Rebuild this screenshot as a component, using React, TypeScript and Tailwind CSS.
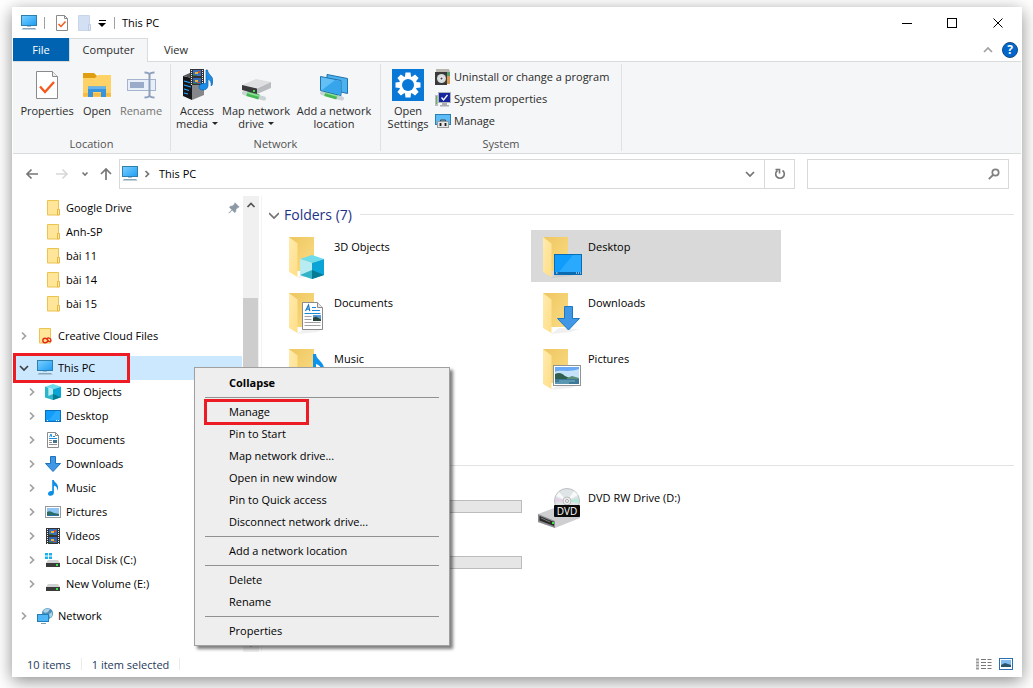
import { ReactNode } from 'react'

type IconProps = { className?: string }

function MonitorIcon({ className = 'h-4 w-4' }: IconProps) {
  return (
    <svg viewBox="0 0 16 16" className={className}>
      <defs>
        <linearGradient id="screen" x1="0" y1="0" x2="1" y2="1">
          <stop offset="0" stopColor="#7cd0ff" />
          <stop offset="1" stopColor="#1c9df5" />
        </linearGradient>
      </defs>
      <rect x="0.5" y="0.5" width="15" height="10" fill="url(#screen)" stroke="#2f7fae" />
      <rect x="6" y="11" width="4" height="1" fill="#9cc3dc" />
      <path d="M2 13h12l1.500 1.500H.5z" fill="#8aa5b8" />
    </svg>
  )
}

function CheckDocIcon({ className = 'h-4 w-4' }: IconProps) {
  return (
    <svg viewBox="0 0 24 32" className={className}>
      <path d="M1.500 2.500h16l5 5v22h-21z" fill="#fff" stroke="#8a8a8a" />
      <path d="M17.500 2.500v5h5" fill="#eee" stroke="#8a8a8a" />
      <path d="M5 17.500l5 5.500 9-10" fill="none" stroke="#f4581c" strokeWidth="2.300" />
    </svg>
  )
}

function CheckDocSmallIcon() {
  return (
    <svg viewBox="0 0 12 16" className="h-4 w-3">
      <path d="M.5.5h8l3 3v12H.5z" fill="#fff" stroke="#8a8a8a" />
      <path d="M8.500.5v3h3" fill="none" stroke="#8a8a8a" />
      <path d="M2.500 9l2.500 2.500L9.500 6.500" fill="none" stroke="#f4581c" strokeWidth="1.500" />
    </svg>
  )
}

function FolderSmallIcon({ className = 'h-4 w-4' }: IconProps) {
  return (
    <svg viewBox="0 0 16 16" className={className}>
      <path d="M2.500.5h11v14.500h-11z" fill="#ffe597" stroke="#ecc34f" />
      <path d="M12.500 9.500h2V15h-2z" fill="#ffe9a8" stroke="#e5b93f" />
    </svg>
  )
}

function GhostFolderIcon() {
  return (
    <svg viewBox="0 0 16 16" className="h-4 w-4">
      <path d="M2.500.5h11v15h-11z" fill="#d3e0f3" stroke="#c8d6ec" />
      <path d="M12.500 9.500h2v6h-2z" fill="#dde7f6" stroke="#bccce6" />
    </svg>
  )
}

function CreativeCloudIcon() {
  return (
    <svg viewBox="0 0 16 16" className="h-4 w-4">
      <path d="M2.500.5h11v14.500h-11z" fill="#ffe597" stroke="#ecc34f" />
      <path
        d="M11.500 12.800c-1.200 1.300-2.200 2-3.400 2a2.300 2.300 0 1 1 0-4.600c1.300 0 2.500 1.600 3.600 2.900.8.900 2.300.5 2.300-.8 0-2.600-3.700-2.900-4.600-1"
        fill="none"
        stroke="#e32a14"
        strokeWidth="1.400"
      />
    </svg>
  )
}

function CubeShape() {
  return (
    <>
      <path d="M12 0l12 4-12 4L0 4z" fill="#6fdcec" />
      <path d="M0 4l12 4v16L0 20z" fill="#b7edf2" />
      <path d="M24 4L12 8v16l12-4z" fill="#0aa5d6" />
      <path d="M0 20l12-5v9z" fill="#33b3c7" />
      <path d="M24 20l-12-5v9z" fill="#057a94" />
    </>
  )
}

function CubeIcon() {
  return (
    <svg viewBox="0 0 24 24" className="h-4 w-4">
      <CubeShape />
      <path d="M0 4l5 1.700v16L0 20z" fill="#2cb4cb" />
    </svg>
  )
}

function DesktopShape() {
  return (
    <>
      <rect x="0.5" y="0.5" width="27" height="20" fill="#109cfb" stroke="#0a6cb4" />
      <path d="M5 18L19 1h8v17z" fill="#2aaaff" />
      <rect x="1" y="18" width="26" height="2" fill="#0b6bb0" />
      <path d="M2 19h1.500M22 19h1M24 19h1M26 19h1" stroke="#fff" />
    </>
  )
}

function DesktopIcon() {
  return (
    <svg viewBox="0 0 16 16" className="h-4 w-4">
      <rect x="0.5" y="2.500" width="15" height="11" fill="#109cfb" stroke="#0a70bd" />
      <path d="M4 12l7-9h4v9z" fill="#2aaaff" />
      <path d="M2 12.500h1M11 12.500h1M13 12.500h1" stroke="#fff" />
    </svg>
  )
}

function DocumentShape() {
  return (
    <>
      <path d="M.5.5h15l5 5v22H.5z" fill="#fff" stroke="#8b8b8b" />
      <path d="M15.500.5v5h5" fill="#e8e8e8" stroke="#8b8b8b" />
      <path d="M3.500 9l3-6 1.300 6M4.500 7.200h3" fill="none" stroke="#1679c6" strokeWidth="1.200" />
      <path d="M10 5.500h4M10 8.500h8M2.500 11.500h16" stroke="#1e8ad6" />
      <path d="M2.500 14.500h7M2.500 17.500h7M2.500 20.500h16M2.500 23.500h16" stroke="#a2a2a2" />
      <rect x="11" y="13" width="8" height="6" fill="#5a9bd5" />
      <path d="M11 16l3-1.500 5 3V19h-8z" fill="#28463c" />
    </>
  )
}

function DocumentIcon() {
  return (
    <svg viewBox="0 0 16 16" className="h-4 w-4">
      <path d="M2.500.5h8l3 3v12h-11z" fill="#fff" stroke="#8b8b8b" />
      <path d="M10.500.5v3h3" fill="none" stroke="#8b8b8b" />
      <path d="M4.500 5l1.500-3 .8 3M8 4.500h2M4 6.500h8" fill="none" stroke="#1e8ad6" />
      <path d="M4 8.500h3M4 10.500h3M4 12.500h8" stroke="#8f8f8f" />
      <rect x="8" y="8" width="4" height="3" fill="#41748e" />
    </svg>
  )
}

function DownloadIcon() {
  return (
    <svg viewBox="0 0 16 16" className="h-4 w-4">
      <path d="M5.500.5h5v7h5L8 15.500.5 7.500h5z" fill="#3f97e6" stroke="#1f72bd" />
    </svg>
  )
}

function MusicIcon() {
  return (
    <svg viewBox="0 0 16 16" className="h-4 w-4">
      <path d="M7.200 0h1.600c.3 2.400 4.900 3.800 4.300 8.300-.1.900-.5 1.700-1 2.200.4-2.700-.7-4.300-3.200-4.900v7.100c0 1.800-1.500 3.100-3.300 3.100C4 15.800 3 15 3 13.700c0-1.700 2-3.100 4.200-2.600z" fill="#0c8fe6" />
    </svg>
  )
}

function PictureShape() {
  return (
    <>
      <rect x="0.5" y="0.5" width="27" height="20" fill="#fff" stroke="#8f9499" />
      <rect x="2" y="2" width="24" height="17" fill="#6aa9f5" />
      <path d="M2 7c5-3 13 1 24-3v9H2z" fill="#c6e2f8" />
      <path d="M2 9c4-2 7-1 10 2l7 3v1H2z" fill="#2f5f4f" />
      <path d="M14 13l5-2 7 2v2H14z" fill="#5d8f79" />
      <rect x="2" y="14" width="24" height="5" fill="#3d7896" />
      <path d="M6 16h16M2 18h14" stroke="#78b5cf" />
    </>
  )
}

function PictureIcon() {
  return (
    <svg viewBox="0 0 16 16" className="h-4 w-4">
      <rect x="0.5" y="2.500" width="15" height="11" fill="#fff" stroke="#999" />
      <rect x="2" y="4" width="12" height="8" fill="#8ec5f5" />
      <path d="M2 8c3-2 5 0 7 1l5 1v2H2z" fill="#2b6d66" />
      <path d="M2 11h12v1H2z" fill="#2c6ea6" />
    </svg>
  )
}

function FilmShape() {
  return (
    <>
      <rect x="1" y="0" width="14" height="16" fill="#333" />
      <rect x="4" y="1" width="8" height="6" fill="#3c6fc0" />
      <rect x="4" y="9" width="8" height="6" fill="#3565b5" />
      <path d="M6 3h3v2H6zM6 11h3v2H6z" fill="#e9b72c" />
      <path d="M9 2h2v2H9zM8 13h3v1H8z" fill="#c3512e" />
      <path d="M4 6h4v1H4zM4 14h4v1H4z" fill="#27753f" />
      <path d="M2.500 1v15M13.500 1v15" stroke="#eee" strokeDasharray="1 1" />
    </>
  )
}

function VideoIcon() {
  return (
    <svg viewBox="0 0 16 16" className="h-4 w-4">
      <FilmShape />
    </svg>
  )
}

function DiskIcon({ windows = false }: { windows?: boolean }) {
  return (
    <svg viewBox="0 0 16 16" className="h-4 w-4">
      {windows && <path d="M0 1h3v2.500H0zM4 1h3v2.500H4zM0 4.500h3V7H0zM4 4.500h3V7H4z" fill="#16b3ee" />}
      <path d="M3 8h10l2 3H1z" fill="#d2d2d2" />
      <rect x="1" y="11" width="14" height="4" fill="#3b3b3b" />
      <rect x="11" y="12" width="2" height="2" fill="#39e24b" />
    </svg>
  )
}

function NetworkIcon() {
  return (
    <svg viewBox="0 0 16 16" className="h-4 w-4">
      <circle cx="10.500" cy="5.500" r="5.500" fill="#4f8fb9" />
      <path d="M6 3c2-3 5-3 7-2l-2 3-3 1zM12 6l3-2v4l-2 2z" fill="#a9d3e6" />
      <rect x="0.5" y="6.500" width="11" height="7" fill="#4cb6f6" stroke="#237db7" />
      <path d="M4 15.500h5" stroke="#7d9caf" />
    </svg>
  )
}

// Half open folder the tile overlays sit on
function FolderTileIcon({ children }: { children?: ReactNode }) {
  return (
    <svg viewBox="0 0 48 44" className="h-11 w-12 shrink-0">
      <defs>
        <linearGradient id="folderBack" x1="0" y1="0" x2="1" y2="1">
          <stop offset="0" stopColor="#edc65f" />
          <stop offset="1" stopColor="#fbdc85" />
        </linearGradient>
        <linearGradient id="folderFlap" x1="0" y1="0" x2="1" y2="1">
          <stop offset="0" stopColor="#ffeab0" />
          <stop offset="1" stopColor="#ffdf86" />
        </linearGradient>
      </defs>
      <path d="M13 41l8-6 20 1-8 3z" fill="#000" opacity="0.06" />
      <path d="M5 0h25v34H5z" fill="url(#folderBack)" />
      <path d="M5 0l8.500 6.500V40L5 35z" fill="url(#folderFlap)" />
      {children}
    </svg>
  )
}

function DriveTileIcon() {
  return (
    <svg viewBox="0 0 48 44" className="h-11 w-12 shrink-0">
      <path d="M5 20L24 12l18 5-20 11z" fill="#ddd" />
      <path d="M5 20l17 8v9L5 29z" fill="#444" />
      <path d="M22 28l20-11v8L22 37z" fill="#bbb" />
    </svg>
  )
}

function DvdTileIcon() {
  return (
    <svg viewBox="0 0 48 44" className="h-11 w-12 shrink-0">
      <path d="M0 26l19-7 23 5v6L17 40 0 34z" fill="#cfcfd2" />
      <path d="M0 26l17 7v7L0 34z" fill="#8b8b8f" />
      <path d="M1.500 28l14.500 6v4L1.500 32.500z" fill="#2a2a2b" />
      <path d="M3 30l9 4" stroke="#777" />
      <rect x="14" y="34" width="2" height="2" fill="#38e53f" />
      <circle cx="29" cy="13" r="12.500" fill="#dfe4e6" stroke="#b9bec0" />
      <path d="M29 13L18 8l3-4zM29 13l7-10 4 4z" fill="#f8fafa" />
      <path d="M29 13l11-3 1 5z" fill="#b8ead8" />
      <path d="M29 13l-12 1 1-4z" fill="#e6cfe9" />
      <circle cx="29" cy="13" r="4" fill="#eee" stroke="#bcbcbc" />
      <circle cx="29" cy="13" r="1.500" fill="#fff" stroke="#aaa" />
      <rect x="16" y="17" width="26" height="12" rx="1" fill="#0b0b0b" />
      <text x="29" y="26.500" textAnchor="middle" fontSize="10" fill="#fff">
        DVD
      </text>
    </svg>
  )
}

function OpenFolderIcon() {
  return (
    <svg viewBox="0 0 32 32" className="h-8 w-8">
      <path d="M2 4h11l3 3v6H2z" fill="#e19d10" />
      <path d="M2 9h12l3-3h13v22H2z" fill="#ffd267" />
      <path d="M2 24h28v3.500H2z" fill="#f6bd46" />
      <path d="M7 28V17.500h18V28h-5v-5h-8v5z" fill="#3a94dc" />
      <path d="M7 17.500h18V20H7z" fill="#65b3ec" />
    </svg>
  )
}

function RenameIcon() {
  return (
    <svg viewBox="0 0 32 32" className="h-8 w-8">
      <rect x="2.500" y="10.500" width="28" height="11" fill="#e9eff8" stroke="#a4b4cf" />
      <rect x="5" y="13" width="14" height="6" fill="#9aabc9" />
      <path d="M19.500 3.500c3 0 4.500.5 5 2 .5-1.500 2-2 5-2M24.500 5v22M19.500 28.500c3 0 4.500-.5 5-2 .5 1.500 2 2 5 2" fill="none" stroke="#8e9fbd" strokeWidth="2" />
    </svg>
  )
}

function AccessMediaIcon() {
  return (
    <svg viewBox="0 0 32 32" className="h-8 w-8">
      <path d="M2 7l9 2v22l-9-4z" fill="#15161a" />
      <path d="M11 9l12-3v20l-12 5z" fill="#85878b" />
      <path d="M2 7l9-4 12 3-12 3z" fill="#55585d" />
      <path d="M3 12l7 2M3 16l7 2M3 20l5 1.500M3 24l4 1" stroke="#2da5ff" strokeWidth="1.200" />
      <g transform="translate(8 0)">
        <FilmShape />
      </g>
      <path d="M25 1h1.500c.5 5 6 6 5.500 12-.1 1.500-.8 3-1.800 4 .3-4-1-6-3.200-7v6.500c0 3-2.500 4.500-5 4.500s-4-1.200-4-3c0-2.500 3.500-4.300 7-3.300z" fill="#1b8de6" stroke="#0d65b8" strokeWidth="0.7" />
    </svg>
  )
}

function CableShape() {
  return (
    <>
      <path d="M4 24l20 5.500" stroke="#c9d2d4" strokeWidth="4" strokeLinecap="round" />
      <path d="M7 24.500l12 3.500" stroke="#46b854" strokeWidth="5" />
      <path d="M7 23.500l12 3.500" stroke="#8fe098" strokeWidth="1.500" />
    </>
  )
}

function MapDriveIcon() {
  return (
    <svg viewBox="0 0 32 32" className="h-8 w-8">
      <CableShape />
      <path d="M2 16l14-6 15 3-14 6z" fill="#dfdfe1" />
      <path d="M2 16l15 3.500V25L2 21z" fill="#3a3a3c" />
      <path d="M17 19.500l14-6.500v6L17 25z" fill="#b9bbbf" />
      <rect x="13" y="21" width="2" height="2" fill="#3ee04d" />
    </svg>
  )
}

function AddLocationIcon() {
  return (
    <svg viewBox="0 0 32 32" className="h-8 w-8">
      <CableShape />
      <path d="M9 5.500l20.500 4v15L9 20z" fill="#4bb2ef" stroke="#2172ab" />
      <path d="M2.500 7.500l20.500 4v15L2.500 21.500z" fill="#62c0f7" stroke="#2172ab" />
      <path d="M4 21L17 11l5.500 1v14z" fill="#37a5ec" />
    </svg>
  )
}

function SettingsIcon() {
  return (
    <svg viewBox="0 0 32 32" className="h-8 w-8">
      <rect width="32" height="32" fill="#0a78d7" />
      <g fill="#fff">
        <path d="M13.500 3.500h5l.8 6h-6.600zM13.500 28.500h5l.8-6h-6.600z" />
        <path d="M13.500 3.500h5l.8 6h-6.600zM13.500 28.500h5l.8-6h-6.600z" transform="rotate(45 16 16)" />
        <path d="M13.500 3.500h5l.8 6h-6.600zM13.500 28.500h5l.8-6h-6.600z" transform="rotate(90 16 16)" />
        <path d="M13.500 3.500h5l.8 6h-6.600zM13.500 28.500h5l.8-6h-6.600z" transform="rotate(135 16 16)" />
        <circle cx="16" cy="16" r="9" />
      </g>
      <circle cx="16" cy="16" r="6" fill="#0a78d7" />
    </svg>
  )
}

function UninstallIcon() {
  return (
    <svg viewBox="0 0 16 16" className="h-4 w-4">
      <path d="M1 0h13l1 3-1 12H2z" fill="#b9b7ae" />
      <path d="M12 3h3v12h-3z" fill="#d89a55" />
      <path d="M12 3h3v4h-3z" fill="#57a06c" />
      <rect x="0" y="3" width="12" height="13" fill="#3a3a3a" />
      <circle cx="6.500" cy="9.500" r="4.500" fill="#d8dcdd" />
      <circle cx="6.500" cy="9.500" r="1.500" fill="#444" stroke="#fff" />
    </svg>
  )
}

function SystemPropertiesIcon() {
  return (
    <svg viewBox="0 0 16 16" className="h-4 w-4">
      <rect x="0" y="4" width="3" height="11" fill="#b8bcc0" />
      <rect x="1" y="5" width="1" height="8" fill="#5dbb57" />
      <rect x="3.500" y="1.500" width="12" height="10" fill="#16269c" stroke="#b1b5bb" />
      <path d="M6.500 6.500l2 2.500 4-5" fill="none" stroke="#fff" strokeWidth="1.300" />
      <path d="M7 12h5v2h2v1.500H5V14h2z" fill="#a9adb2" />
    </svg>
  )
}

function ManageIcon() {
  return (
    <svg viewBox="0 0 16 16" className="h-4 w-4">
      <rect x="0.5" y="1.500" width="15" height="10" fill="#5bbcf7" stroke="#2b7fb0" />
      <path d="M5.500 8.500V7h5v1.500" fill="none" stroke="#444" />
      <rect x="2.500" y="8.500" width="11" height="6" fill="#e7e7e7" stroke="#999" />
      <path d="M5.500 10v3M10.500 10v3" stroke="#222" strokeWidth="1.800" />
    </svg>
  )
}

function Chevron({ className, path = 'M3 1.500L6.500 5 3 8.500' }: { className?: string; path?: string }) {
  return (
    <svg viewBox="0 0 10 10" className={`h-2.5 w-2.5 ${className ?? ''}`}>
      <path d={path} fill="none" stroke="currentColor" strokeWidth="1.700" />
    </svg>
  )
}

const chevronDown = 'M1 3l4 4 4-4'

function TitleBar() {
  return (
    <header className="flex h-[30px] items-center pl-2">
      <MonitorIcon />
      <span className="ml-[7px] h-3 w-px bg-neutral-400" />
      <button aria-label="Properties" className="ml-[11px]">
        <CheckDocSmallIcon />
      </button>
      <button aria-label="New folder" className="ml-2">
        <GhostFolderIcon />
      </button>
      <button aria-label="Customize Quick Access Toolbar" className="ml-1 flex flex-col items-center gap-0.5 p-0.5">
        <span className="h-px w-[7px] bg-black" />
        <span className="border-x-4 border-t-4 border-x-transparent border-t-black" />
      </button>
      <span className="ml-1.5 h-3 w-px bg-neutral-400" />
      <h1 className="ml-[7px] grow">This PC</h1>
      <div className="flex">
        <button aria-label="Minimize" className="flex w-[45px] justify-center">
          <svg viewBox="0 0 11 11" className="h-[11px] w-[11px]">
            <path d="M0 5.500h10" stroke="#000" />
          </svg>
        </button>
        <button aria-label="Maximize" className="flex w-[45px] justify-center">
          <svg viewBox="0 0 11 11" className="h-[11px] w-[11px]">
            <rect x="0.5" y="0.5" width="9" height="9" fill="none" stroke="#000" />
          </svg>
        </button>
        <button aria-label="Close" className="flex w-[46px] justify-center">
          <svg viewBox="0 0 11 11" className="h-[11px] w-[11px]">
            <path d="M.5.500l9 9M9.500.500l-9 9" stroke="#000" />
          </svg>
        </button>
      </div>
    </header>
  )
}

function Tabs() {
  return (
    <nav className="flex h-6 items-stretch border-b border-[#dadbdc]">
      <button className="w-14 bg-[#0063b1] pt-0.5 text-white">File</button>
      <button className="-mb-px w-[79px] border border-b-0 border-[#dadbdc] bg-[#f5f6f7] text-[#2b2b2b]">Computer</button>
      <button className="w-14 pt-0.5 text-[#2b2b2b]">View</button>
      <div className="ml-auto flex items-center gap-[5px] pr-[3px]">
        <button aria-label="Minimize the Ribbon" className="p-1 text-neutral-400">
          <Chevron path="M1 7l4-4 4 4" />
        </button>
        <button
          aria-label="Help"
          className="flex h-4 w-4 items-center justify-center rounded-full border border-[#174a82] bg-[#0066cc] text-xs leading-3 font-bold text-white"
        >
          ?
        </button>
      </div>
    </nav>
  )
}

type RibbonButtonProps = { icon: ReactNode; lines: string[]; className: string; menu?: boolean }

function RibbonButton({ icon, lines, className, menu }: RibbonButtonProps) {
  return (
    <button className={`flex flex-col items-center leading-[13px] ${className}`}>
      <span className="mb-[3px] flex h-8 items-center">{icon}</span>
      {lines.map((line, i) => (
        <span key={line} className="flex items-center gap-1 whitespace-nowrap">
          {line}
          {menu && i === lines.length - 1 && (
            <span className="border-x-[3px] border-t-[3px] border-x-transparent border-t-neutral-800" />
          )}
        </span>
      ))}
    </button>
  )
}

function RibbonGroup({ title, className, children }: { title: string; className: string; children: ReactNode }) {
  return (
    <section className="my-0.5 flex flex-col border-r border-[#e0e1e3]">
      <div className={`flex grow ${className}`}>{children}</div>
      <h2 className="mb-px text-center leading-[13px] text-neutral-600">{title}</h2>
    </section>
  )
}

function Ribbon() {
  return (
    <div className="flex h-[92px] border-b border-[#dadbdc] bg-[#f5f6f7] text-[#2b2b2b]">
      <RibbonGroup title="Location" className="pt-[5px] pr-[7px] pl-1.5">
        <RibbonButton icon={<CheckDocIcon className="h-8 w-6" />} lines={['Properties']} className="w-14" />
        <RibbonButton icon={<OpenFolderIcon />} lines={['Open']} className="w-11" />
        <RibbonButton icon={<RenameIcon />} lines={['Rename']} className="w-11 text-neutral-500" />
      </RibbonGroup>
      <RibbonGroup title="Network" className="pt-[5px] pr-[3px] pl-0.5">
        <RibbonButton icon={<AccessMediaIcon />} lines={['Access', 'media']} className="w-12" menu />
        <RibbonButton icon={<MapDriveIcon />} lines={['Map network', 'drive']} className="w-[70px]" menu />
        <RibbonButton icon={<AddLocationIcon />} lines={['Add a network', 'location']} className="w-[86px]" />
      </RibbonGroup>
      <RibbonGroup title="System" className="pt-[5px] pr-2.5">
        <RibbonButton icon={<SettingsIcon />} lines={['Open', 'Settings']} className="w-[54px]" />
        <div className="-mt-[3px] flex w-44 flex-col items-start">
          <button className="flex h-[22px] items-center gap-[3px]">
            <UninstallIcon />
            Uninstall or change a program
          </button>
          <button className="flex h-[22px] items-center gap-[3px]">
            <SystemPropertiesIcon />
            System properties
          </button>
          <button className="flex h-[22px] items-center gap-[3px]">
            <ManageIcon />
            Manage
          </button>
        </div>
      </RibbonGroup>
    </div>
  )
}

function AddressRow() {
  return (
    <div className="flex items-center pt-[5px] pr-3 pb-[7px] text-neutral-500">
      <div className="flex w-[106px] shrink-0 items-center pl-[11px]">
        <button aria-label="Back">
          <svg viewBox="0 0 16 16" className="h-4 w-4">
            <path d="M14 8H3M7.500 3.500L3 8l4.500 4.500" fill="none" stroke="#777" strokeWidth="1.700" />
          </svg>
        </button>
        <button aria-label="Forward" className="ml-3.5">
          <svg viewBox="0 0 16 16" className="h-4 w-4">
            <path d="M2 8h11M8.500 3.500L13 8l-4.500 4.500" fill="none" stroke="#d8d8d8" strokeWidth="1.700" />
          </svg>
        </button>
        <button aria-label="Recent locations" className="ml-2.5">
          <svg viewBox="0 0 10 10" className="h-2.5 w-2.5">
            <path d="M2.500 3.500L5 6l2.500-2.500" fill="none" stroke="#777" strokeWidth="1.600" />
          </svg>
        </button>
        <button aria-label="Up" className="ml-2">
          <svg viewBox="0 0 16 16" className="h-4 w-4">
            <path d="M8 14V3M3 8l5-5 5 5" fill="none" stroke="#777" strokeWidth="1.700" />
          </svg>
        </button>
      </div>
      <div className="flex h-[30px] grow items-center border border-[#d9d9d9] pl-0.5">
        <MonitorIcon />
        <Chevron className="ml-1" path="M3.500 2l3 3-3 3" />
        <button className="ml-[7px] text-black">This PC</button>
        <button aria-label="Previous locations" className="mr-px ml-auto px-2">
          <Chevron path={chevronDown} />
        </button>
        <button aria-label="Refresh" className="flex h-full w-[30px] items-center justify-center border-l border-[#d9d9d9]">
          <svg viewBox="0 0 12 12" className="h-3 w-3">
            <path d="M8.500 2.500a4.300 4.300 0 1 1-5 0M1.500 1.500h4v4" fill="none" stroke="#777" strokeWidth="1.600" />
          </svg>
        </button>
      </div>
      <label className="ml-3 flex h-[30px] w-[202px] items-center border border-[#d9d9d9] pr-2">
        <input type="search" aria-label="Search This PC" className="min-w-0 grow bg-transparent px-2 text-black outline-none" />
        <svg viewBox="0 0 12 12" className="h-3 w-3">
          <circle cx="7.500" cy="4.500" r="3.200" fill="none" stroke="#808080" strokeWidth="1.700" />
          <path d="M5 7L.8 11.200" stroke="#808080" strokeWidth="1.800" />
        </svg>
      </label>
    </div>
  )
}

type TreeEntry = { label: string; icon: ReactNode; nested?: boolean; leaf?: boolean; pinned?: boolean; open?: boolean }

const tree: TreeEntry[][] = [
  [
    { label: 'Google Drive', icon: <FolderSmallIcon />, nested: true, leaf: true, pinned: true },
    { label: 'Anh-SP', icon: <FolderSmallIcon />, nested: true, leaf: true },
    { label: 'bài 11', icon: <FolderSmallIcon />, nested: true, leaf: true },
    { label: 'bài 14', icon: <FolderSmallIcon />, nested: true, leaf: true },
    { label: 'bài 15', icon: <FolderSmallIcon />, nested: true, leaf: true },
  ],
  [{ label: 'Creative Cloud Files', icon: <CreativeCloudIcon /> }],
  [
    { label: 'This PC', icon: <MonitorIcon />, open: true },
    { label: '3D Objects', icon: <CubeIcon />, nested: true },
    { label: 'Desktop', icon: <DesktopIcon />, nested: true },
    { label: 'Documents', icon: <DocumentIcon />, nested: true },
    { label: 'Downloads', icon: <DownloadIcon />, nested: true },
    { label: 'Music', icon: <MusicIcon />, nested: true },
    { label: 'Pictures', icon: <PictureIcon />, nested: true },
    { label: 'Videos', icon: <VideoIcon />, nested: true },
    { label: 'Local Disk (C:)', icon: <DiskIcon windows />, nested: true },
    { label: 'New Volume (E:)', icon: <DiskIcon />, nested: true },
  ],
  [{ label: 'Network', icon: <NetworkIcon /> }],
]

function TreeRow({ entry }: { entry: TreeEntry }) {
  return (
    <li className={`relative ${entry.open ? 'bg-[#cce8ff]' : ''}`}>
      <button className={`flex h-6 w-full items-center ${entry.nested ? 'pl-3.5' : 'pl-1.5'}`}>
        <span className="flex w-[18px] shrink-0">
          {!entry.leaf && (
            <Chevron
              className={entry.open ? 'text-neutral-700' : 'text-neutral-400'}
              path={entry.open ? chevronDown : undefined}
            />
          )}
        </span>
        {entry.icon}
        <span className="ml-[5px] whitespace-nowrap">{entry.label}</span>
        {entry.pinned && (
          <svg viewBox="0 0 12 12" className="mr-0.5 ml-auto h-3 w-3">
            <path d="M7 .8L11.200 5l-1.400.6-1.900 1.900-.2 2.300-1.200.6L4.200 8 1 11.200.8 11 4 7.800 1.600 5.500l.6-1.200 2.300-.2 1.900-1.900z" fill="#8b99a5" stroke="#8b99a5" strokeWidth="0.6" />
          </svg>
        )}
      </button>
      {entry.open && <span className="pointer-events-none absolute -inset-y-[3px] left-0 w-[117px] border-3 border-[#ed1c24]" />}
    </li>
  )
}

function NavigationPane() {
  return (
    <aside className="flex shrink-0">
      <div className="flex w-[229px] flex-col gap-2">
        {tree.map((entries) => (
          <ul key={entries[0].label}>
            {entries.map((entry) => (
              <TreeRow key={entry.label} entry={entry} />
            ))}
          </ul>
        ))}
      </div>
      <div className="ml-px flex w-4 flex-col bg-[#f0f0f0] text-neutral-600">
        <button aria-label="Scroll up" className="flex h-[17px] items-center pl-[3px]">
          <Chevron path="M1.500 7L5 3.500 8.500 7" />
        </button>
        <div className="mt-[85px] h-44 w-[15px] bg-[#cdcdcd]" />
        <button aria-label="Scroll down" className="mt-auto flex h-[17px] items-center pl-[3px]">
          <Chevron path="M1.500 3L5 6.500 8.500 3" />
        </button>
      </div>
    </aside>
  )
}

function SectionHeader({ title }: { title?: string }) {
  return (
    <h2 className="flex h-[31px] items-center px-[7px] text-sm text-[#1e3287]">
      <Chevron className="mr-[5px] text-neutral-500" path="M0 3l5 5 5-5" />
      {title}
      <span className="ml-2 h-px grow bg-[#e2e2e2]" />
    </h2>
  )
}

type TileProps = { id: string; label?: string; icon: ReactNode; selected?: boolean; used?: boolean }

function Tile({ id, label, icon, selected, used }: TileProps) {
  return (
    <button
      aria-label={id}
      className={`flex h-[52px] items-start gap-0.5 pt-[7px] pl-[7px] text-left ${selected ? 'bg-[#d9d9d9]' : ''}`}
    >
      {icon}
      {label && <span className="leading-5">{label}</span>}
      {used && <span className="mt-3 h-[13px] w-[188px] border border-[#bcbcbc] bg-[#e6e6e6]" />}
    </button>
  )
}

const folders: TileProps[] = [
  { id: '3d', label: '3D Objects', icon: <FolderTileIcon><g transform="translate(16 18)"><CubeShape /></g></FolderTileIcon> },
  { id: 'desktop', label: 'Desktop', icon: <FolderTileIcon><g transform="translate(16 17)"><DesktopShape /></g></FolderTileIcon>, selected: true },
  { id: 'documents', label: 'Documents', icon: <FolderTileIcon><g transform="translate(18 9)"><DocumentShape /></g></FolderTileIcon> },
  {
    id: 'downloads',
    label: 'Downloads',
    icon: (
      <FolderTileIcon>
        <path d="M26.500 13.500h8v12h7L30.500 37l-11-11.500h7z" fill="#3f97e6" stroke="#1f78c4" />
      </FolderTileIcon>
    ),
  },
  {
    id: 'music',
    label: 'Music',
    icon: (
      <FolderTileIcon>
        <path d="M29 5h3c0 6 9 8 8 16l-2 5c0-7-2-10-6-11v15c0 7-12 7-12 1 0-4 5-6 9-4z" fill="#0c93ec" />
      </FolderTileIcon>
    ),
  },
  { id: 'pictures', label: 'Pictures', icon: <FolderTileIcon><g transform="translate(15 16)"><PictureShape /></g></FolderTileIcon> },
  { id: 'videos', icon: <FolderTileIcon><g transform="translate(18 18)"><FilmShape /></g></FolderTileIcon> },
]

const drives: TileProps[] = [
  { id: 'c', icon: <DriveTileIcon />, used: true },
  { id: 'd', label: 'DVD RW Drive (D:)', icon: <DvdTileIcon /> },
  { id: 'e', icon: <DriveTileIcon />, used: true },
]

function TileGrid({ tiles }: { tiles: TileProps[] }) {
  return (
    <div className="grid grid-cols-[repeat(auto-fill,250px)] gap-1 pr-[200px] pl-[15px]">
      {tiles.map((tile) => (
        <Tile key={tile.id} {...tile} />
      ))}
    </div>
  )
}

type MenuEntry = { label: string; bold?: boolean; marked?: boolean }

const menuGroups: MenuEntry[][] = [
  [{ label: 'Collapse', bold: true }],
  [
    { label: 'Manage', marked: true },
    { label: 'Pin to Start' },
    { label: 'Map network drive...' },
    { label: 'Open in new window' },
    { label: 'Pin to Quick access' },
    { label: 'Disconnect network drive...' },
  ],
  [{ label: 'Add a network location' }],
  [{ label: 'Delete' }, { label: 'Rename' }],
  [{ label: 'Properties' }],
]

function ContextMenu() {
  return (
    <div
      role="menu"
      className="absolute top-[360px] left-[182px] w-64 border border-[#a0a0a0] bg-[#eee] pt-1 pb-[3px] shadow-[3px_3px_3px_rgba(0,0,0,0.5)]"
    >
      {menuGroups.map((group, i) => (
        <div key={group[0].label}>
          {i > 0 && <hr className="mx-2.5 my-[3px] border-[#919191]" />}
          {group.map((item) => (
            <button
              key={item.label}
              role="menuitem"
              className={`relative flex h-[22px] w-full items-center pl-[34px] ${item.bold ? 'font-bold' : ''}`}
            >
              {item.label}
              {item.marked && <span className="absolute -inset-y-0.5 left-[9px] w-[105px] border-3 border-[#ed1c24]" />}
            </button>
          ))}
        </div>
      ))}
    </div>
  )
}

function StatusBar() {
  return (
    <footer className="flex h-6 items-center pr-[7px] pl-3.5 text-[#1e395b]">
      <span className="pt-0.5">10 items</span>
      <span className="mx-2.5 h-3 w-px bg-[#ececec]" />
      <span className="pt-0.5">1 item selected</span>
      <span className="ml-2.5 h-3 w-px bg-[#ececec]" />
      <div className="ml-auto flex gap-1.5">
        <button aria-label="Details view">
          <svg viewBox="0 0 16 16" className="h-4 w-4">
            <path d="M0 3.500h3M0 6.500h3M0 9.500h3M0 12.500h3" stroke="#999" strokeWidth="2" />
            <path d="M5 3.500h5M11.500 3.500h4M5 6.500h5M11.500 6.500h4M5 9.500h5M11.500 9.500h4M5 12.500h5M11.500 12.500h4" stroke="#777" />
          </svg>
        </button>
        <button aria-label="Large icons view">
          <svg viewBox="0 0 16 16" className="h-4 w-4">
            <rect x="1.500" y="2.500" width="13" height="11" fill="#fff" stroke="#2b6fae" />
            <rect x="3" y="4" width="10" height="7" fill="#7fbdf0" />
            <path d="M3 9l4-2 6 2v2H3z" fill="#28546d" />
          </svg>
        </button>
      </div>
    </footer>
  )
}

export default function App() {
  return (
    <div className="flex min-h-screen bg-white pt-[7px] pr-[11px] pb-[11px] pl-3 font-['Open_Sans',sans-serif] text-[11px] text-black">
      <div className="relative flex min-w-0 grow flex-col bg-white p-px shadow-[0_4px_16px_rgba(0,0,0,0.45)]">
        <TitleBar />
        <Tabs />
        <Ribbon />
        <AddressRow />
        <div className="flex grow">
          <NavigationPane />
          <main className="ml-0.5 min-w-0 grow border-l border-[#f3f3f3] pt-[3px]">
            <SectionHeader title="Folders (7)" />
            <TileGrid tiles={folders} />
            <SectionHeader />
            <TileGrid tiles={drives} />
          </main>
        </div>
        <StatusBar />
        <ContextMenu />
      </div>
    </div>
  )
}
